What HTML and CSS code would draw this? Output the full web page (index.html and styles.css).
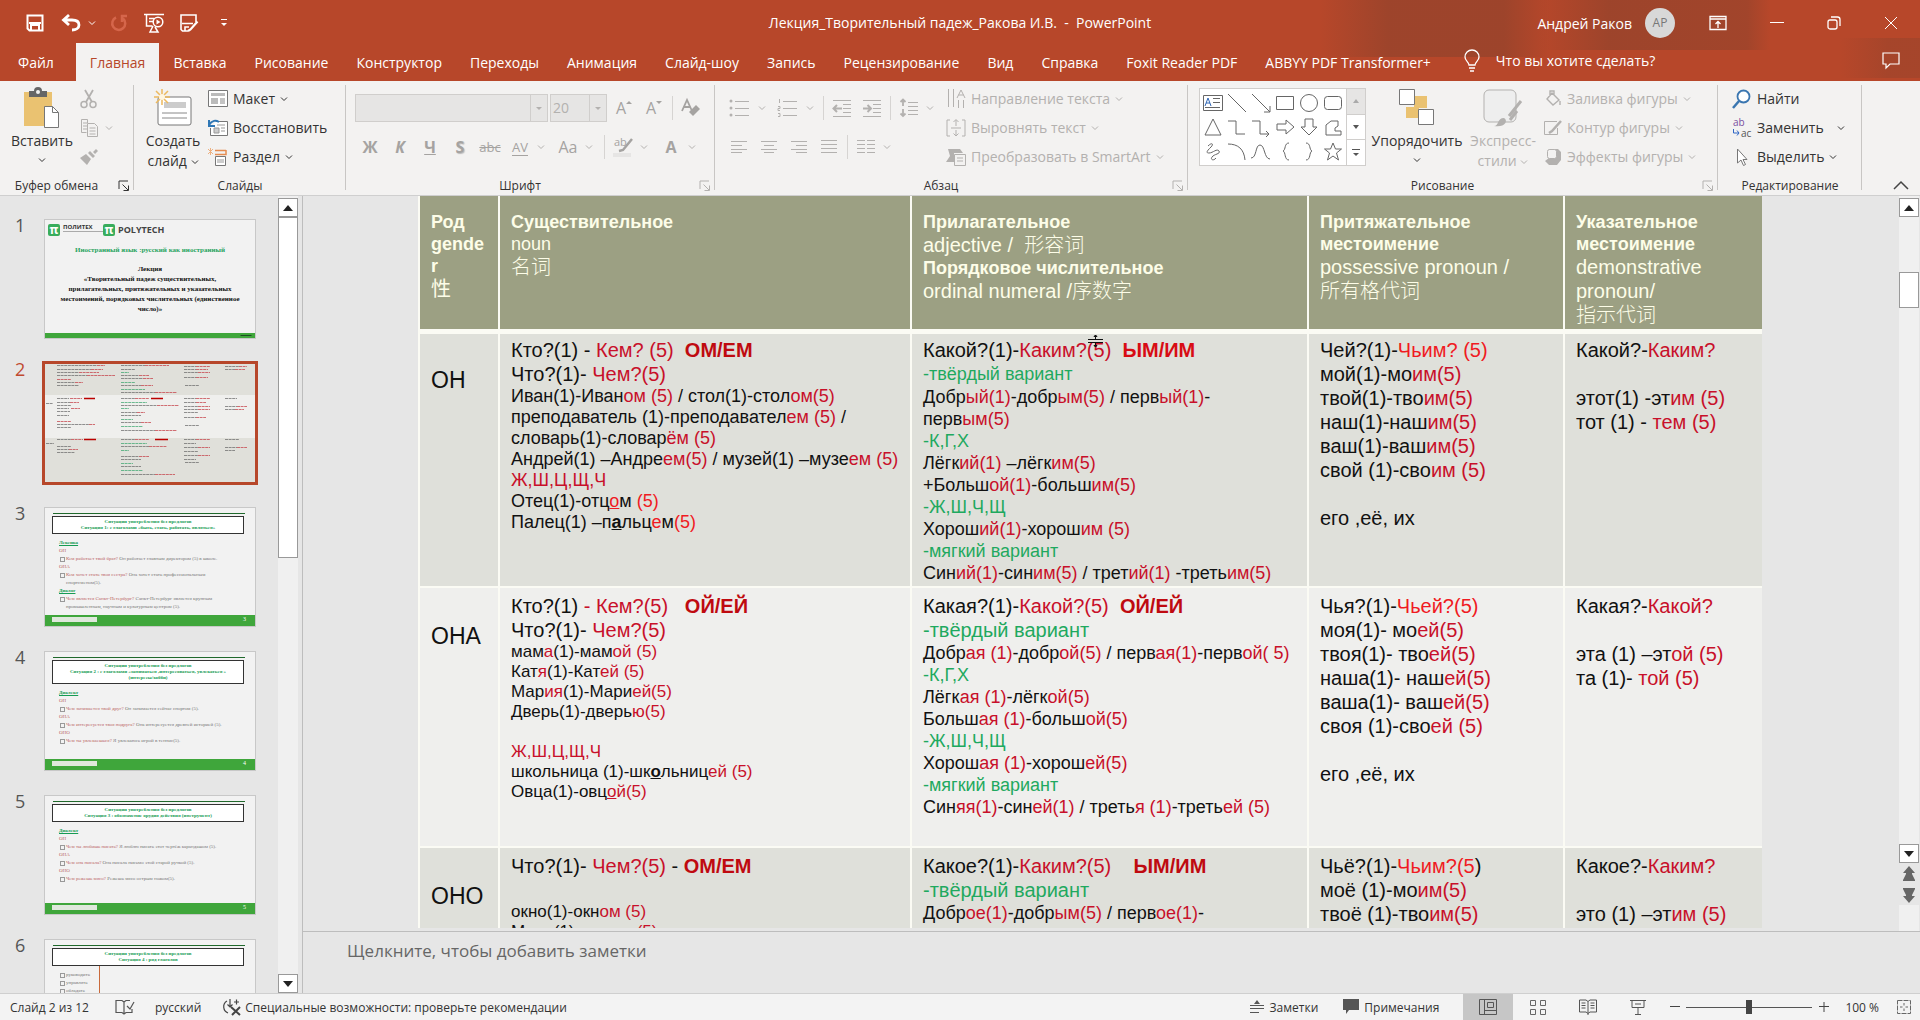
FILE: index.html
```html
<!DOCTYPE html>
<html lang="ru">
<head>
  <meta charset="utf-8">
  <title>Лекция_Творительный падеж_Ракова И.В. - PowerPoint</title>
  <link rel="stylesheet" href="styles.css">
</head>
<body>
  <svg class="defs" aria-hidden="true">
    <symbol id="chev" viewBox="0 0 8 8"><path d="M1 2.500l3 3 3-3" fill="none" stroke="currentColor"/></symbol>
    <symbol id="launch" viewBox="0 0 12 12"><path d="M1 9V1h9M4.500 4.500l5.500 5.500M10.500 5.500v5h-5" fill="none" stroke="currentColor"/></symbol>
  </svg>

  <header class="top">
    <div class="titlebar">
      <div class="quick">
        <button aria-label="Сохранить"><svg width="18" height="18" viewBox="0 0 18 18"><path d="M1.500 1.500h15v15h-13l-2-2z" fill="none" stroke="#fff" stroke-width="2"/><path d="M3 9h12M5 16v-5h8v5" fill="none" stroke="#fff" stroke-width="2"/></svg></button>
        <button class="q-undo" aria-label="Отменить"><svg width="20" height="18" viewBox="0 0 20 18"><path d="M8 1L2.500 6 8 11M3 6h8c5 0 7 2 7 5s-3 5-7 5" fill="none" stroke="#fff" stroke-width="2.800"/></svg></button>
        <button class="q-chev" aria-label="Список отмены"><svg width="8" height="8"><use href="#chev"/></svg></button>
        <button class="q-redo" aria-label="Повторить" disabled><svg width="18" height="18" viewBox="0 0 18 18"><path d="M6 3.500a6.500 6.500 0 1 0 7 1M17 2h-5v6" fill="none" stroke="#d5664b" stroke-width="2.500"/></svg></button>
        <button class="q-show" aria-label="С начала"><svg width="20" height="20" viewBox="0 0 20 20"><path d="M0 1.500h20M2.500 2v11h6M5 5.500h5M5 8.500h4M9 13l-3 6h8l-3-5" fill="none" stroke="#fff" stroke-width="1.500"/><circle cx="14" cy="9" r="4.800" fill="#b7472a" stroke="#fff" stroke-width="1.500"/><path d="M12.500 6.500v5l4-2.500z" fill="#fff"/></svg></button>
        <button class="q-edit" aria-label="Сохранить как"><svg width="18" height="18" viewBox="0 0 18 18"><path d="M16 8V1H1v14.500L2.500 17H8M2 9.500h11M5 16.500V13h4" fill="none" stroke="#fff" stroke-width="1.600"/><path d="M17.500 7.500l-7 8-2.500 1.500" fill="none" stroke="#fff" stroke-width="2.200"/></svg></button>
        <button class="q-more" aria-label="Настройка панели"><svg width="8" height="10" viewBox="0 0 8 10"><path d="M1 1.500h6" stroke="#fff"/><path d="M1 5h6L4 8z" fill="#fff"/></svg></button>
      </div>
      <div class="doc-title">Лекция_Творительный падеж_Ракова И.В.&nbsp; -&nbsp; PowerPoint</div>
      <div class="window">
        <span>Андрей Раков</span>
        <span class="avatar">АР</span>
        <button aria-label="Параметры ленты"><svg width="18" height="16" viewBox="0 0 18 16"><path d="M1 1.500h16v13H1zM1 4h16M9 13V7M6.500 9L9 6.500 11.500 9" fill="none" stroke="#fff" stroke-width="1.300"/></svg></button>
        <button aria-label="Свернуть"><svg width="14" height="14"><path d="M0 6.500h14" stroke="#fff"/></svg></button>
        <button aria-label="Восстановить"><svg width="14" height="14" viewBox="0 0 14 14"><rect x="1" y="4" width="9" height="9" rx="2" fill="none" stroke="#fff" stroke-width="1.300"/><path d="M4 1h6.500q2.500 0 2.500 2.500V10" fill="none" stroke="#fff" stroke-width="1.300"/></svg></button>
        <button aria-label="Закрыть"><svg width="14" height="14"><path d="M1 1l12 12M13 1L1 13" stroke="#fff"/></svg></button>
      </div>
    </div>
    <nav class="tabs">
      <a href="#">Файл</a>
      <a href="#" class="active">Главная</a>
      <a href="#">Вставка</a>
      <a href="#">Рисование</a>
      <a href="#">Конструктор</a>
      <a href="#">Переходы</a>
      <a href="#">Анимация</a>
      <a href="#">Слайд-шоу</a>
      <a href="#">Запись</a>
      <a href="#">Рецензирование</a>
      <a href="#">Вид</a>
      <a href="#">Справка</a>
      <a href="#">Foxit Reader PDF</a>
      <a href="#">ABBYY PDF Transformer+</a>
      <label class="tell" for="tell"><svg width="16" height="22" viewBox="0 0 16 22"><path d="M5 15c0-3-4-4-4-8a7 7 0 0 1 14 0c0 4-4 5-4 8zM5 18h6M6 21h4" fill="none" stroke="#fff" stroke-width="1.300"/></svg></label>
      <input id="tell" type="text" placeholder="Что вы хотите сделать?">
      <button class="comment-btn" aria-label="Примечания"><svg width="18" height="18" viewBox="0 0 18 18"><path d="M1 1h16v11H8l-4 4v-4H1z" fill="none" stroke="#fff" stroke-width="1.200"/></svg></button>
    </nav>
  </header>

  <section class="ribbon">
    <div class="group g-clip">
      <div class="group-body">
        <button class="big"><svg width="36" height="40" viewBox="0 0 36 40"><path d="M0 4h28v34H0z" fill="#eac271"/><path d="M5 3h5a4 4 0 0 1 8 0h5v6H5z" fill="#666"/><circle cx="14" cy="4" r="2" fill="#f3f2f1"/><path d="M20.500 18.500h8l6 6v15h-14z" fill="#fff" stroke="#777"/><path d="M28.500 18.500v6h6" fill="none" stroke="#777"/></svg>Вставить<svg width="8" height="8"><use href="#chev"/></svg></button>
        <div class="stack off">
          <button aria-label="Вырезать" disabled><svg width="18" height="20" viewBox="0 0 18 20"><path d="M5 1l7 12M13 1L6 13" stroke="currentColor" stroke-width="1.800"/><circle cx="4" cy="15.500" r="3" fill="none" stroke="currentColor" stroke-width="1.500"/><circle cx="13" cy="15.500" r="3" fill="none" stroke="currentColor" stroke-width="1.500"/></svg></button>
          <button aria-label="Копировать" disabled><svg width="20" height="20" viewBox="0 0 20 20"><path d="M7.500 5V1.500h-6v13h5M3 5h4M3 8h4M3 11h4M7.500 5.500h7l3 3v10h-10zM9.500 10h6M9.500 13h6M9.500 16h6" fill="none" stroke="currentColor"/></svg><svg class="near" width="8" height="8"><use href="#chev"/></svg></button>
          <button aria-label="Формат по образцу" disabled><svg width="20" height="18" viewBox="0 0 20 18"><path d="M0 10l6-4 5 5-4 6zM8 5l5 5 2-2-5-5zM13 4l3-3 2 2-3 3z" fill="currentColor"/></svg></button>
        </div>
      </div>
      <div class="group-name">Буфер обмена<button class="launcher" aria-label="Буфер обмена"><svg width="12" height="12"><use href="#launch"/></svg></button></div>
    </div>

    <div class="group g-slides">
      <div class="group-body">
        <button class="big"><svg width="38" height="38" viewBox="0 0 38 38"><rect x="4" y="8" width="33" height="28" rx="2" fill="#fff" stroke="#777"/><path d="M10 13h22v6H10z" fill="#ccc"/><path d="M8 24h25M8 29h25" stroke="#888"/><path d="M8 0v16M0 8h16M2 2l12 12M14 2L2 14" stroke="#edb95e" stroke-width="1.500"/><circle cx="8" cy="8" r="3" fill="#fff6e0"/></svg><span>Создать<br>слайд <svg width="8" height="8"><use href="#chev"/></svg></span></button>
        <div class="stack">
          <button><svg width="20" height="18" viewBox="0 0 20 18"><path d="M.500 .500h19v16H.500z" fill="#fff" stroke="#777"/><path d="M3 3h14v3H3zM3 8h7v6H3z" fill="#bbb"/><path d="M12 9h5M12 11h5M12 13h5" stroke="#888"/></svg>Макет <svg width="8" height="8"><use href="#chev"/></svg></button>
          <button><svg width="20" height="18" viewBox="0 0 20 18"><path d="M8 2.500h11.500v14H2.500V9" fill="#fff" stroke="#777"/><path d="M9 6h8M6 9h5v5H6zM13 9h4M13 12h4" stroke="#999" fill="#ccc"/><path d="M1 1v6h6M1 6c3-5 7-5 10-3" fill="none" stroke="#2f77b5" stroke-width="2"/></svg>Восстановить</button>
          <button><svg width="20" height="18" viewBox="0 0 20 18"><path d="M7 2.500h11M7 6.500h11V2" stroke="#e58c50" fill="none" stroke-width="1.500"/><path d="M7.500 8.500h10v9h-10z" fill="#fff" stroke="#777"/><path d="M9 11h7v4H9z" fill="#ccc"/><path d="M0 1l5 5M5 1L0 6M2.500 0v7" stroke="#edb080"/></svg>Раздел <svg width="8" height="8"><use href="#chev"/></svg></button>
        </div>
      </div>
      <div class="group-name">Слайды</div>
    </div>

    <div class="group g-font off">
      <div class="group-rows">
        <div class="tools">
          <div class="combo">
            <select class="font-name" aria-label="Шрифт" disabled><option></option></select>
            <svg width="6" height="4"><path d="M0 0h6L3 3z" fill="#b3b1af"/></svg>
          </div>
          <div class="combo">
            <select class="font-size" aria-label="Размер шрифта" disabled><option>20</option></select>
            <svg width="6" height="4"><path d="M0 0h6L3 3z" fill="#b3b1af"/></svg>
          </div>
          <button class="t" aria-label="Увеличить размер шрифта" disabled>A<svg width="6" height="14" viewBox="0 0 6 14"><path d="M0 3h6L3 0z" fill="currentColor"/></svg></button>
          <button class="t" aria-label="Уменьшить размер шрифта" disabled>A<svg width="6" height="14" viewBox="0 0 6 14"><path d="M0 0h6L3 3z" fill="currentColor"/></svg></button>
          <i class="sep"></i>
          <button class="t" aria-label="Очистить формат" disabled><svg width="20" height="20" viewBox="0 0 20 20"><path d="M1 13L6 2l5 11M3 9h6" fill="none" stroke="currentColor" stroke-width="1.800"/><path d="M8 14l7-7 4 4-7 7z" fill="currentColor"/></svg></button>
        </div>
        <div class="tools">
          <button class="t" disabled><b>Ж</b></button>
          <button class="t" disabled><b><em>К</em></b></button>
          <button class="t" disabled><b><u>Ч</u></b></button>
          <button class="t" disabled><b class="shadow">S</b></button>
          <button class="t small" disabled><s>abc</s></button>
          <button class="t small" disabled><span class="spacing">AV</span></button>
          <svg class="drop" width="8" height="8"><use href="#chev"/></svg>
          <button class="t" disabled>Aa</button>
          <svg class="drop" width="8" height="8"><use href="#chev"/></svg>
          <i class="sep"></i>
          <button class="t" aria-label="Цвет выделения" disabled><svg width="20" height="22" viewBox="0 0 20 22"><text x="1" y="10" font-size="11" fill="currentColor">ab</text><path d="M19 3L10 14l-4 1" fill="none" stroke="currentColor" stroke-width="2.500"/><path d="M0 17h18v4H0z" fill="#e6e5e4"/></svg></button>
          <svg class="drop" width="8" height="8"><use href="#chev"/></svg>
          <button class="t" disabled><b>A</b></button>
          <svg class="drop" width="8" height="8"><use href="#chev"/></svg>
        </div>
      </div>
      <div class="group-name">Шрифт<button class="launcher off" aria-label="Шрифт"><svg width="12" height="12"><use href="#launch"/></svg></button></div>
    </div>

    <div class="group g-para">
      <div class="group-body off">
        <div class="group-rows">
          <div class="tools">
            <button class="t" aria-label="Маркеры" disabled><svg width="20" height="18" viewBox="0 0 20 18"><path d="M6 2.500h14M6 9.500h14M6 16.500h14" stroke="currentColor"/><circle cx="2" cy="2" r="1.500" fill="currentColor"/><circle cx="2" cy="9" r="1.500" fill="currentColor"/><circle cx="2" cy="16" r="1.500" fill="currentColor"/></svg></button>
            <svg class="drop wide" width="8" height="8"><use href="#chev"/></svg>
            <button class="t" aria-label="Нумерация" disabled><svg width="20" height="18" viewBox="0 0 20 18"><path d="M6 2.500h14M6 9.500h14M6 16.500h14M2.500 0v4M1 7.500h2v2H1v2h2M1 14.500h2v3H1" fill="none" stroke="currentColor"/></svg></button>
            <svg class="drop wide" width="8" height="8"><use href="#chev"/></svg>
            <i class="sep"></i>
            <button class="t" aria-label="Уменьшить отступ" disabled><svg width="20" height="18" viewBox="0 0 20 18"><path d="M1 1.500h18M11 5.500h8M11 9.500h8M11 13.500h8M1 17.500h18" stroke="currentColor"/><path d="M10 9.500H2M5 6L1.500 9.500 5 13" fill="none" stroke="currentColor" stroke-width="2"/></svg></button>
            <button class="t" aria-label="Увеличить отступ" disabled><svg width="20" height="18" viewBox="0 0 20 18"><path d="M1 1.500h18M11 5.500h8M11 9.500h8M11 13.500h8M1 17.500h18" stroke="currentColor"/><path d="M1 9.500h8M5.500 6L9 9.500 5.500 13" fill="none" stroke="currentColor" stroke-width="2"/></svg></button>
            <i class="sep"></i>
            <button class="t" aria-label="Междустрочный интервал" disabled><svg width="20" height="20" viewBox="0 0 20 20"><path d="M9 4.500h10M9 8.500h10M9 12.500h10M9 16.500h10" stroke="currentColor"/><path d="M4 2v6M1.500 4L4 1.500 6.500 4M4 11v7M1.500 15.500L4 18l2.500-2.500" fill="none" stroke="currentColor" stroke-width="1.800"/></svg></button>
            <svg class="drop" width="8" height="8"><use href="#chev"/></svg>
          </div>
          <div class="tools">
            <button class="t" aria-label="По левому краю" disabled><svg width="16" height="12" viewBox="0 0 16 12"><path d="M0 .500h16M0 4.500h11M0 8.500h16M0 11.500h11" stroke="currentColor"/></svg></button>
            <button class="t" aria-label="По центру" disabled><svg width="16" height="12" viewBox="0 0 16 12"><path d="M0 .500h16M3 4.500h10M0 8.500h16M3 11.500h10" stroke="currentColor"/></svg></button>
            <button class="t" aria-label="По правому краю" disabled><svg width="16" height="12" viewBox="0 0 16 12"><path d="M0 .500h16M5 4.500h11M0 8.500h16M5 11.500h11" stroke="currentColor"/></svg></button>
            <button class="t" aria-label="По ширине" disabled><svg width="16" height="14" viewBox="0 0 16 14"><path d="M0 .500h16M0 4.500h16M0 8.500h16M0 12.500h16" stroke="currentColor"/></svg></button>
            <i class="sep"></i>
            <button class="t" aria-label="Колонки" disabled><svg width="18" height="14" viewBox="0 0 18 14"><path d="M0 .500h8M10 .500h8M0 4.500h8M10 4.500h8M0 8.500h8M10 8.500h8M0 12.500h8M10 12.500h8" stroke="currentColor"/></svg></button>
            <svg class="drop" width="8" height="8"><use href="#chev"/></svg>
          </div>
        </div>
        <div class="stack">
          <button disabled><svg width="20" height="20" viewBox="0 0 20 20"><path d="M2.500 0v18M7.500 0v18M12.500 11v8M17.500 11v8M11 9l4-8 4 8M12.500 6h5" fill="none" stroke="currentColor"/></svg>Направление текста <svg width="8" height="8"><use href="#chev"/></svg></button>
          <button disabled><svg width="20" height="18" viewBox="0 0 20 18"><path d="M4 1H1v16h3M16 1h3v16h-3M5 9h10M10 1v6M7.500 3L10 .500 12.500 3M10 11v6M7.500 14.500L10 17l2.500-2.500" fill="none" stroke="currentColor"/></svg>Выровнять текст <svg width="8" height="8"><use href="#chev"/></svg></button>
          <button disabled><svg width="20" height="18" viewBox="0 0 20 18"><path d="M2 1h12l3 4H8v9H0l4-6z" fill="currentColor"/><path d="M8.500 6.500h11v11h-11zM11 10h6M11 13h6" fill="#f3f2f1" stroke="currentColor"/></svg>Преобразовать в SmartArt <svg width="8" height="8"><use href="#chev"/></svg></button>
        </div>
      </div>
      <div class="group-name">Абзац<button class="launcher off" aria-label="Абзац"><svg width="12" height="12"><use href="#launch"/></svg></button></div>
    </div>

    <div class="group g-draw">
      <div class="group-body">
        <div class="gallery">
          <svg width="146" height="76" viewBox="0 0 146 76" fill="none" stroke="#666">
            <path d="M3.500 6.500h19v15h-19z"/><path d="M5 17l3-8 3 8M6 14h4" stroke="#2f66b5"/><path d="M13 9.500h7M13 13.500h7M5 18.500h15"/>
            <path d="M28 5l18 18M52 5l18 18M70 17v6h-6"/>
            <path d="M76.500 7.500h17v13h-17z"/><circle cx="109" cy="14" r="8.500"/><rect x="124.500" y="7.500" width="17" height="13" rx="3"/>
            <path d="M13 30l8 16H5zM28 32h8v13h9M52 32h8v13h9M66 42l3 3-3 3"/>
            <path d="M77 35h9v-4l8 7-8 7v-4h-9zM105 30h8v8h4l-8 8-8-8h4zM126 46V36l5-4h7v5l-3 2v3h6v4z"/>
            <path d="M8 57c4-4 6-2 3 1s-6 6-2 6 8-5 10-2-5 3-7 6 2 4 4 1"/><path d="M28 55c10 0 16 5 17 16M51 69c6 0 4-13 9-13s4 14 10 14"/>
            <path d="M89 54c-5 0-3 7-6 8 3 1 1 9 6 9M106 54c5 0 3 7 6 8-3 1-1 9-6 9"/>
            <path d="M133 54l2.500 6h6l-5 4 2 7-5.500-4-5.500 4 2-7-5-4h6z"/>
          </svg>
          <div class="gallery-nav">
            <button aria-label="Вверх" disabled><svg width="6" height="4"><path d="M0 4h6L3 0z" fill="#aaa"/></svg></button>
            <button aria-label="Вниз"><svg width="6" height="4"><path d="M0 0h6L3 4z" fill="#555"/></svg></button>
            <button aria-label="Все фигуры"><svg width="8" height="8"><path d="M0 .500h8" stroke="#555"/><path d="M1 4h6L4 7z" fill="#555"/></svg></button>
          </div>
        </div>
        <button class="big b-arr"><svg width="36" height="38" viewBox="0 0 36 38"><path d="M15 7h13v12H15zM7 18h13v11H7z" fill="#eac271"/><path d="M.500 .500h15v15H.500zM19.500 20.500h15v15h-15z" fill="#fff" stroke="#777"/></svg>Упорядочить<svg width="8" height="8"><use href="#chev"/></svg></button>
        <button class="big b-sty off" disabled><svg width="40" height="38" viewBox="0 0 40 38"><rect x="1" y="1" width="32" height="32" rx="5" fill="#eee" stroke="currentColor"/><path d="M38 12L26 27M34 22l-7 9" stroke="currentColor" stroke-width="3"/><path d="M11 37c5 0 3-8 10-8 5 3 0 10-10 8z" fill="currentColor"/></svg><span>Экспресс-<br>стили <svg width="8" height="8"><use href="#chev"/></svg></span></button>
        <div class="stack off">
          <button disabled><svg width="18" height="18" viewBox="0 0 18 18"><path d="M8 3l7 7-6 5-6-6zM6 6V1h4v5M16 11v4" fill="none" stroke="currentColor" stroke-width="1.400"/></svg>Заливка фигуры <svg width="8" height="8"><use href="#chev"/></svg></button>
          <button disabled><svg width="18" height="18" viewBox="0 0 18 18"><path d="M13 2.500H.500v13h13V9" fill="none" stroke="currentColor"/><path d="M17 2L8 12l-3 2" fill="none" stroke="currentColor" stroke-width="2.500"/></svg>Контур фигуры <svg width="8" height="8"><use href="#chev"/></svg></button>
          <button disabled><svg width="18" height="18" viewBox="0 0 18 18"><path d="M5 1h9l3 3v8l-4 5H5l-4-4 4-3z" fill="currentColor"/><rect x="3.500" y="1.500" width="9" height="9" rx="2" fill="#f3f2f1" stroke="currentColor"/></svg>Эффекты фигуры <svg width="8" height="8"><use href="#chev"/></svg></button>
        </div>
      </div>
      <div class="group-name">Рисование<button class="launcher off" aria-label="Рисование"><svg width="12" height="12"><use href="#launch"/></svg></button></div>
    </div>

    <div class="group g-edit">
      <div class="group-body">
        <div class="stack">
          <button><svg width="20" height="20" viewBox="0 0 20 20"><circle cx="11.500" cy="7.500" r="6" fill="#fff" stroke="#3a76b0" stroke-width="1.800"/><path d="M7 12l-6 7" stroke="#3a76b0" stroke-width="2.500"/></svg>Найти</button>
          <button><svg width="20" height="22" viewBox="0 0 20 22"><text x="1" y="9" font-size="10" fill="#7a4fa0">ab</text><text x="9" y="20" font-size="10" fill="#555">ac</text><path d="M1.500 12v4H7M5 13.500L7 16l-2 2.500" fill="none" stroke="#2f66c5"/></svg>Заменить <svg class="far" width="8" height="8"><use href="#chev"/></svg></button>
          <button><svg width="20" height="18" viewBox="0 0 20 18"><path d="M5.500 1v14l3.500-3 2.500 5.500 2-1-2.500-5h4z" fill="#fff" stroke="#777"/></svg>Выделить <svg width="8" height="8"><use href="#chev"/></svg></button>
        </div>
      </div>
      <div class="group-name">Редактирование</div>
    </div>
    <button class="collapse" aria-label="Свернуть ленту"><svg width="16" height="10"><path d="M1 9l7-7 7 7" fill="none" stroke="#444" stroke-width="1.500"/></svg></button>
  </section>

  <main class="work">
    <aside class="thumbs">
      <ol class="thumb-list">
        <li>
          <span class="num">1</span>
          <div class="slide cover">
            <div class="logos"><i class="pi">π</i><span class="logo-ru">ПОЛИТЕХ</span><i class="pi">π</i><span class="logo-en">POLYTECH</span></div>
            <p class="lang">Иностранный язык :русский как иностранный</p>
            <p class="topic">Лекция<br>«Творительный падеж существительных,<br>прилагательных, притяжательных и указательных<br>местоимений, порядковых числительных (единственное<br>число)»</p>
            <div class="strip"></div>
          </div>
        </li>
        <li class="current">
          <span class="num">2</span>
          <div class="slide">
            <svg width="210" height="118" viewBox="0 0 210 118">
              <path d="M0 0h210v118H0z" fill="#e0e0da"/><path d="M0 31h210v43H0z" fill="#efefed"/>
              <g stroke-width="1" stroke-dasharray="3 .6" fill="none" opacity=".7">
                <path stroke="#666" d="M12 1.500h40M12 5.500h34M12 8.500h22M12 11.500h30M12 18.500h18M12 21.500h22M1 39.500h7M12 34.500h12M12 38.500h13M12 41.500h14M12 44.500h12M12 47.500h13M12 51.500h12M12 60.500h32M12 63.500h14M1 79.500h8M12 75.500h14M12 82.500h14M12 85.500h12M12 88.500h18M76 1.500h24M76 5.500h14M76 11.500h18M76 14.500h22M76 21.500h20M76 28.500h34M76 34.500h14M76 41.500h36M76 48.500h16M76 51.500h20M76 58.500h20M76 66.500h34M76 75.500h14M76 82.500h28M76 92.500h18M76 95.500h20M76 102.500h20M76 110.500h34M139 2.500h12M139 5.500h12M139 8.500h14M139 13.500h12M140 21.500h14M139 34.500h12M139 38.500h12M139 42.500h14M139 45.500h14M139 48.500h14M139 53.500h12M140 61.500h14M139 75.500h12M139 79.500h12M139 83.500h14M139 87.500h14M139 91.500h14M139 95.500h12M140 98.500h14M180 2.500h14M180 5.500h10M180 34.500h12M180 42.500h12M180 45.500h10M180 75.500h14M180 83.500h12M180 86.500h10"/>
                <path stroke="#c4373f" d="M52 1.500h8M46 5.500h12M34 8.500h20M42 11.500h28M12 15.500h14M30 18.500h8M25 34.500h12M25 38.500h9M26 44.500h9M12 57.500h14M44 60.500h6M26 75.500h12M24 85.500h9M100 1.500h24M94 11.500h10M98 14.500h10M96 21.500h12M110 28.500h22M90 34.500h14M112 41.500h22M92 48.500h8M96 58.500h10M110 66.500h22M90 75.500h14M104 82.500h18M94 92.500h10M110 110.500h20M151 2.500h14M151 5.500h12M153 8.500h12M151 13.500h12M151 34.500h14M151 38.500h10M153 42.500h12M153 45.500h12M151 53.500h10M151 75.500h14M153 83.500h12M153 91.500h12M194 2.500h8M190 5.500h10M192 42.500h10M190 45.500h9M192 83.500h10"/>
                <path stroke="#35a56b" d="M76 8.500h8M76 18.500h14M76 25.500h24M76 38.500h26M76 44.500h8M76 55.500h12M76 62.500h22M76 79.500h26M76 86.500h8M76 99.500h12M76 106.500h22"/>
              </g>
              <path d="M39 34.500h11M39 75.500h12M106 34.500h12M110 75.500h13" stroke="#b00" stroke-width="1.500"/>
            </svg>
          </div>
        </li>
        <li>
          <span class="num">3</span>
          <div class="slide topic-slide">
            <h3>Ситуации употребления без предлогов<br>Ситуация 1: с глаголами «быть, стать, работать, являться»</h3>
            <div class="tiny"><u>Лексика</u><p>ОН</p><p class="q"><em>Кем работает твой брат?</em> Он работает главным директором (5) в школе.</p><p>ОНА</p><p class="q"><em>Кем хочет стать твоя сестра?</em> Она хочет стать профессиональным спортсменом(5).</p><u>Диалог</u><p class="q"><em>Чем является Санкт-Петербург?</em> Санкт-Петербург является крупным промышленным, научным и культурным центром (5).</p></div>
            <div class="strip wide">3</div>
          </div>
        </li>
        <li>
          <span class="num">4</span>
          <div class="slide topic-slide">
            <h3>Ситуации употребления без предлогов<br>Ситуация 2 : с глаголами «заниматься ,интересоваться, увлекаться »<br>(интересы/хобби)</h3>
            <div class="tiny"><u>Диалект</u><p>ОН</p><p class="q"><em>Чем занимается твой друг?</em> Он занимается сейчас спортом (5).</p><p>ОНА</p><p class="q"><em>Чем интересуется твоя подруга?</em> Она интересуется древней историей (5).</p><p>ОНО</p><p class="q"><em>Чем ты увлекаешься?</em> Я увлекаюсь игрой в теннис(5).</p></div>
            <div class="strip wide">4</div>
          </div>
        </li>
        <li>
          <span class="num">5</span>
          <div class="slide topic-slide">
            <h3>Ситуации употребления без предлогов<br>Ситуация 3 : обозначение орудия действия (инструмент)</h3>
            <div class="tiny"><u>Диалект</u><p>ОН</p><p class="q"><em>Чем ты любишь писать?</em> Я люблю писать этот чертёж карандашом (5).</p><p>ОНА</p><p class="q"><em>Чем она писала?</em> Она писала письмо этой старой ручкой (5).</p><p>ОНО</p><p class="q"><em>Чем режешь мясо?</em> Режешь мясо острым ножом(5).</p></div>
            <div class="strip wide">5</div>
          </div>
        </li>
        <li>
          <span class="num">6</span>
          <div class="slide topic-slide">
            <h3>Ситуации употребления без предлогов<br>Ситуация 4 : ряд глаголов</h3>
            <div class="tiny ruled"><p class="q">руководить</p><p class="q">управлять</p><p class="q">обладать</p></div>
          </div>
        </li>
      </ol>
      <div class="scroll">
        <button aria-label="Вверх"><svg width="10" height="6"><path d="M0 6h10L5 0z" fill="#222"/></svg></button>
        <div class="track"><div class="knob k-long"></div></div>
        <button aria-label="Вниз"><svg width="10" height="6"><path d="M0 0h10L5 6z" fill="#222"/></svg></button>
      </div>
    </aside>

    <section class="editor">
      <div class="stage">
        <div class="canvas">
          <table class="grammar">
            <colgroup><col class="c1"><col class="c2"><col class="c3"><col class="c4"><col></colgroup>
            <thead>
              <tr>
                <th><p>Род</p><p>gender</p><p class="cjk b">性</p></th>
                <th><p>Существительное</p><p class="n">noun</p><p class="cjk">名词</p></th>
                <th><p>Прилагательное</p><p class="en">adjective / &nbsp;<span class="cjk">形容词</span></p><p>Порядковое числительное</p><p class="en">ordinal numeral /<span class="cjk">序数字</span></p></th>
                <th><p>Притяжательное местоимение</p><p class="en">possessive pronoun /</p><p class="en"><span class="cjk">所有格代词</span></p></th>
                <th><p>Указательное местоимение</p><p class="en">demonstrative pronoun/</p><p class="en"><span class="cjk">指示代词</span></p></th>
              </tr>
            </thead>
            <tbody>
              <tr class="r1">
                <td class="who">ОН</td>
                <td>
                  <p>Кто?(1) - <span class="r">Кем? (5)</span>&nbsp; <b>ОМ/ЕМ</b></p>
                  <p>Что?(1)- <span class="r">Чем?(5)</span></p>
                  <p class="s">Иван(1)-Иван<span class="r">ом (5)</span> / стол(1)-стол<span class="r">ом(5)</span></p>
                  <p class="s">преподаватель (1)-преподавател<span class="r">ем (5)</span> /</p>
                  <p class="s">словарь(1)-словар<span class="r">ём (5)</span></p>
                  <p class="s">Андрей(1) –Андре<span class="r">ем(5)</span> / музей(1) –музе<span class="r">ем (5)</span></p>
                  <p class="s r">Ж,Ш,Ц,Щ,Ч</p>
                  <p class="s">Отец(1)-отц<u class="hot">о</u>м <span class="hot">(5)</span></p>
                  <p class="s">Палец(1) –п<u class="stress">а</u>льц<span class="hot">е</span>м<span class="hot">(5)</span></p>
                </td>
                <td>
                  <p>Какой?(1)-<span class="r">Каким?(5)</span>&nbsp; <b class="bright">ЫМ/ИМ</b></p>
                  <p class="lead g">-твёрдый вариант</p>
                  <p class="m">Добр<span class="r">ый(1)</span>-добр<span class="r">ым(5)</span> / перв<span class="r">ый(1)</span>-<br>перв<span class="r">ым(5)</span></p>
                  <p class="m g">-К,Г,Х</p>
                  <p class="m">Лёгк<span class="r">ий(1)</span> –лёгк<span class="r">им(5)</span></p>
                  <p class="m">+Больш<span class="r">ой(1)</span>-больш<span class="r">им(5)</span></p>
                  <p class="m g">-Ж,Ш,Ч,Щ</p>
                  <p class="m">Хорош<span class="r">ий(1)</span>-хорош<span class="r">им (5)</span></p>
                  <p class="m g">-мягкий вариант</p>
                  <p class="m">Син<span class="r">ий(1)</span>-син<span class="r">им(5)</span> / трет<span class="r">ий(1)</span> -треть<span class="r">им(5)</span></p>
                </td>
                <td>
                  <p>Чей?(1)-<span class="hot">Чьим? (5)</span></p>
                  <p>мой(1)-мо<span class="r">им(5)</span></p>
                  <p>твой(1)-тво<span class="r">им(5)</span></p>
                  <p>наш(1)-наш<span class="r">им(5)</span></p>
                  <p>ваш(1)-ваш<span class="r">им(5)</span></p>
                  <p>свой (1)-сво<span class="r">им (5)</span></p>
                  <p>&nbsp;</p>
                  <p>его ,её, их</p>
                </td>
                <td>
                  <p>Какой?-<span class="r">Каким?</span></p>
                  <p>&nbsp;</p>
                  <p>этот(1) -эт<span class="r">им (5)</span></p>
                  <p>тот (1) - <span class="r">тем (5)</span></p>
                </td>
              </tr>
              <tr class="r2">
                <td class="who">ОНА</td>
                <td>
                  <p>Кто?(1) <span class="r">- Кем?(5)</span>&nbsp;&nbsp; <b>ОЙ/ЕЙ</b></p>
                  <p>Что?(1)- <span class="r">Чем?(5)</span></p>
                  <p class="xs">мам<span class="r">а</span>(1)-мам<span class="r">ой (5)</span></p>
                  <p class="xs">Кат<span class="r">я</span>(1)-Кат<span class="r">ей (5)</span></p>
                  <p class="xs">Мар<span class="r">ия</span>(1)-Мари<span class="r">ей(5)</span></p>
                  <p class="xs">Дверь(1)-дверь<span class="r">ю(5)</span></p>
                  <p class="xs">&nbsp;</p>
                  <p class="xs r">Ж,Ш,Ц,Щ,Ч</p>
                  <p class="xs">школьница (1)-шк<u class="stress">о</u>льниц<span class="r">ей (5)</span></p>
                  <p class="xs">Овца(1)-овц<u class="r">о</u><span class="r">й(5)</span></p>
                </td>
                <td>
                  <p>Какая?(1)-<span class="r">Какой?(5)</span>&nbsp; <b>ОЙ/ЕЙ</b></p>
                  <p class="g">-твёрдый вариант</p>
                  <p class="m">Добр<span class="r">ая (1)</span>-добр<span class="r">ой(5)</span> / перв<span class="r">ая(1)</span>-перв<span class="r">ой( 5)</span></p>
                  <p class="m g">-К,Г,Х</p>
                  <p class="m">Лёгк<span class="r">ая (1)</span>-лёгк<span class="r">ой(5)</span></p>
                  <p class="m">Больш<span class="r">ая (1)</span>-больш<span class="r">ой(5)</span></p>
                  <p class="m g">-Ж,Ш,Ч,Щ</p>
                  <p class="m">Хорош<span class="r">ая (1)</span>-хорош<span class="r">ей(5)</span></p>
                  <p class="m g">-мягкий вариант</p>
                  <p class="m">Син<span class="r">яя(1)</span>-син<span class="r">ей(1)</span> / треть<span class="r">я (1)</span>-треть<span class="r">ей (5)</span></p>
                </td>
                <td>
                  <p>Чья?(1)-<span class="hot">Чьей?(5)</span></p>
                  <p>моя(1)- мо<span class="r">ей(5)</span></p>
                  <p>твоя(1)- тво<span class="r">ей(5)</span></p>
                  <p>наша(1)- наш<span class="r">ей(5)</span></p>
                  <p>ваша(1)- ваш<span class="r">ей(5)</span></p>
                  <p>своя (1)-сво<span class="r">ей (5)</span></p>
                  <p>&nbsp;</p>
                  <p>его ,её, их</p>
                </td>
                <td>
                  <p>Какая?-<span class="r">Какой?</span></p>
                  <p>&nbsp;</p>
                  <p>эта (1) –эт<span class="r">ой (5)</span></p>
                  <p>та (1)- <span class="r">той (5)</span></p>
                </td>
              </tr>
              <tr class="r3">
                <td class="who">ОНО</td>
                <td>
                  <p>Что?(1)- <span class="r">Чем?(5)</span> - <b>ОМ/ЕМ</b></p>
                  <p>&nbsp;</p>
                  <p class="xs">окно(1)-окн<span class="r">ом (5)</span></p>
                  <p class="xs">Море(1)-мор<span class="r">ем (5)</span></p>
                </td>
                <td>
                  <p>Какое?(1)-<span class="r">Каким?(5)</span>&nbsp;&nbsp;&nbsp; <b>ЫМ/ИМ</b></p>
                  <p class="g">-твёрдый вариант</p>
                  <p class="m">Добр<span class="r">ое(1)</span>-добр<span class="r">ым(5)</span> / перв<span class="r">ое(1)</span>-</p>
                </td>
                <td>
                  <p>Чьё?(1)-<span class="hot">Чьим?(5</span>)</p>
                  <p>моё (1)-мо<span class="r">им(5)</span></p>
                  <p>твоё (1)-тво<span class="r">им(5)</span></p>
                </td>
                <td>
                  <p>Какое?-<span class="r">Каким?</span></p>
                  <p>&nbsp;</p>
                  <p>это (1) –эт<span class="r">им (5)</span></p>
                </td>
              </tr>
            </tbody>
          </table>
          <svg class="resize-cursor" width="15" height="16" viewBox="0 0 15 16"><path d="M0 6.500h15M0 9.500h15M7.500 2v4M7.500 10v4M6 3.500L7.500 2 9 3.500zM6 12.500L7.500 14 9 12.500z" fill="#111" stroke="#111"/></svg>
        </div>
        <div class="scroll">
          <button aria-label="Вверх"><svg width="10" height="6"><path d="M0 6h10L5 0z" fill="#222"/></svg></button>
          <div class="track"><div class="knob k-short"></div></div>
          <button aria-label="Вниз"><svg width="10" height="6"><path d="M0 0h10L5 6z" fill="#222"/></svg></button>
          <button class="jump" aria-label="Предыдущий слайд"><svg width="12" height="16"><path d="M0 7l6-7 6 7H9v1l3 6v1H0v-1l3-6V7z" fill="#666"/></svg></button>
          <button class="jump" aria-label="Следующий слайд"><svg width="12" height="16"><path d="M0 9l6 7 6-7H9V8l3-6V1H0v1l3 6v1z" fill="#666"/></svg></button>
        </div>
      </div>
      <textarea class="notes" aria-label="Заметки к слайду" placeholder="Щелкните, чтобы добавить заметки"></textarea>
    </section>
  </main>

  <footer class="status">
    <span class="st-slide">Слайд 2 из 12</span>
    <button class="st-spell" aria-label="Правописание"><svg width="20" height="16" viewBox="0 0 20 16"><path d="M9 14.500V3L7 1.500H1v12h6l2 1.500 2-1.500h6V10M9 3l2-1.500h4M12 7l3 3 4-7" fill="none" stroke="#555" stroke-width="1.200"/></svg></button>
    <button class="st-lang">русский</button>
    <button class="st-acc"><svg width="20" height="18" viewBox="0 0 20 18"><path d="M5 3C0 6 1 13 6 15M8 1v8M5.500 6.500L8 9l2.500-2.500M12 4h5M14.500 1.500v5" fill="none" stroke="#444" stroke-width="1.200"/><path d="M9 9l9 8M18 9l-8 8" stroke="#444" stroke-width="2"/></svg>Специальные возможности: проверьте рекомендации</button>
    <div class="st-right">
      <button class="st-notes"><svg width="14" height="14" viewBox="0 0 14 14"><path d="M0 5.500h14M0 8.500h14M0 12.500h9" stroke="#555"/><path d="M4 4h6L7 0z" fill="#555"/></svg>Заметки</button>
      <button class="st-comm"><svg width="18" height="16" viewBox="0 0 18 16"><path d="M1 0h16v11H7l-3 4v-4H1z" fill="#555"/></svg>Примечания</button>
      <button class="view on" aria-label="Обычный"><svg width="18" height="16" viewBox="0 0 18 16"><path d="M.500 .500h17v15H.500zM5.500 0v16M5.500 11.500h12M8.500 3.500h6v5h-6z" fill="none" stroke="#555"/></svg></button>
      <button class="view" aria-label="Сортировщик"><svg width="16" height="16" viewBox="0 0 16 16"><path d="M.500 1.500h5v5h-5zM10.500 1.500h5v5h-5zM.500 10.500h5v5h-5zM10.500 10.500h5v5h-5z" fill="none" stroke="#666"/></svg></button>
      <button class="view" aria-label="Чтение"><svg width="18" height="16" viewBox="0 0 18 16"><path d="M9 2.500L7 1H.500v12H7l2 1.500 2-1.500h6.500V1H11zV16M2.500 4h4M2.500 6.500h4M2.500 9h4M11.500 4h4M11.500 6.500h4M11.500 9h4" fill="none" stroke="#555"/></svg></button>
      <button class="view" aria-label="Показ слайдов"><svg width="16" height="16" viewBox="0 0 16 16"><path d="M0 1.500h16M2 1.500v7h12v-7M5 5h6M8 9v6M5 15.500h6" fill="none" stroke="#555"/></svg></button>
      <button class="zoom-btn" aria-label="Уменьшить"><svg width="10" height="10"><path d="M0 4.500h10" stroke="#444"/></svg></button>
      <input class="zoom" type="range" min="0" max="100" value="50" aria-label="Масштаб">
      <button class="zoom-btn" aria-label="Увеличить"><svg width="10" height="10"><path d="M0 4.500h10M5 0v10" stroke="#444"/></svg></button>
      <button class="zoom-val">100 %</button>
      <button class="fit" aria-label="Вписать слайд"><svg width="14" height="14" viewBox="0 0 14 14"><path d="M.500 .500h13v13H.500zM7 3v2.500M7 8.500V11M3 7h2.500M8.500 7H11" fill="none" stroke="#666" stroke-dasharray="5 1"/></svg></button>
    </div>
  </footer>
</body>
</html>
```

FILE: styles.css
```css
* {
  box-sizing: border-box;
}
body {
  margin: 0;
  height: 100vh;
  display: flex;
  flex-direction: column;
  overflow: hidden;
  background: #e6e6e6;
  font-family: 'Open Sans', 'Noto Sans', sans-serif;
  font-size: 14px;
  color: #333;
}
p, h3, ol {
  margin: 0;
  padding: 0;
}
button, input, select, textarea {
  font: inherit;
  color: inherit;
  background: none;
  border: none;
  padding: 0;
  margin: 0;
}
svg {
  display: block;
  flex: none;
  overflow: visible;
}
.defs {
  display: none;
}
.off {
  color: #b3b1af;
}

/* title bar and tabs */
.top {
  color: #fff;
  background-color: #b7472a;
  background-image:
    linear-gradient(90deg, transparent, rgba(140, 66, 44, .6) 30%, rgba(140, 66, 44, .6) 80%, transparent),
    linear-gradient(90deg, transparent, rgba(140, 66, 44, .6) 30%, rgba(140, 66, 44, .5) 90%, transparent),
    linear-gradient(90deg, transparent, rgba(140, 66, 44, .4) 60%);
  background-repeat: no-repeat;
  background-size: 230px 57px, 230px 50px, 80px 40px;
  background-position: right 370px top 0, right 150px top 0, right 0 top 38px;
}
.titlebar {
  display: grid;
  grid-template-columns: 1fr auto 1fr;
  height: 40px;
}
.quick, .window {
  display: flex;
  align-items: center;
}
.quick {
  padding-left: 26px;
}
.q-undo {
  margin-left: 17px;
}
.q-chev {
  margin-left: 7px;
}
.q-redo {
  margin-left: 14px;
}
.q-show, .q-edit {
  margin-left: 16px;
}
.q-more {
  margin-left: 22px;
}
.doc-title {
  line-height: 46px;
}
.window {
  justify-content: flex-end;
  padding-right: 22px;
}
.window button {
  margin-left: 43px;
}
.window .avatar + button {
  margin-left: 34px;
}
.avatar {
  width: 30px;
  height: 30px;
  margin-left: 13px;
  border-radius: 50%;
  background: #d8d8d8;
  color: #777;
  font-size: 12px;
  line-height: 30px;
  text-align: center;
}
.tabs {
  display: flex;
  align-items: center;
  height: 41px;
  padding-left: 4px;
}
.tabs a {
  height: 38px;
  padding: 0 14px;
  line-height: 40px;
  margin-top: 3px;
  color: #fff;
  text-decoration: none;
}
.tabs a.active {
  margin-left: 8px;
  background: #f3f2f1;
  color: #b7472a;
}
.tell {
  margin: 0 16px 0 19px;
}
#tell {
  width: 200px;
}
#tell::placeholder {
  color: #fff;
  opacity: 1;
}
.comment-btn {
  margin: 0 20px 0 auto;
}

/* ribbon */
.ribbon {
  display: flex;
  height: 115px;
  background: #f3f2f1;
  border-bottom: 1px solid #cfcfcf;
  line-height: 20px;
}
.group {
  position: relative;
  display: flex;
  flex-direction: column;
  padding-top: 3px;
}
.group::after {
  content: '';
  position: absolute;
  right: 0;
  top: 4px;
  bottom: 5px;
  width: 1px;
  background: #c8c6c4;
}
.g-clip {
  width: 134px;
}
.g-slides {
  width: 212px;
}
.g-font {
  width: 369px;
}
.g-para {
  width: 473px;
}
.g-draw {
  width: 530px;
}
.g-edit {
  width: 144px;
}
.group-body {
  display: flex;
  flex: 1;
}
.group-name {
  position: relative;
  height: 19px;
  color: #333;
  font-size: 12px;
  text-align: center;
}
.g-clip .group-name, .g-font .group-name, .g-para .group-name, .g-draw .group-name {
  padding-right: 21px;
}
.launcher {
  position: absolute;
  right: 4px;
  top: 4px;
}
.big {
  display: flex;
  flex-direction: column;
  align-items: center;
  padding-top: 4px;
}
.big > svg:first-child {
  height: 40px;
  margin-bottom: 3px;
}
.big span svg, .stack button > svg:last-child {
  display: inline-block;
}
.big > svg:last-child {
  margin-top: 5px;
}
.g-clip .big {
  width: 72px;
  margin: 0 6px;
}
.g-slides .big {
  width: 58px;
  margin: 0 6px 0 10px;
}
.g-draw .b-arr {
  width: 98px;
  margin-left: 2px;
}
.g-draw .b-sty {
  width: 74px;
}
.stack {
  display: flex;
  flex-direction: column;
}
.stack button {
  display: flex;
  align-items: center;
  height: 29px;
  gap: 5px;
  white-space: nowrap;
}
.stack .far {
  margin-left: 8px;
}
.g-clip .stack {
  margin-left: -4px;
}
.g-draw .stack {
  margin-left: 4px;
}
.g-edit .stack {
  margin-left: 14px;
}
.group-rows {
  flex: 1;
  padding: 10px 0 0 9px;
}
.g-para .group-rows {
  flex: none;
  width: 231px;
}
.tools {
  display: flex;
  align-items: center;
  height: 28px;
  margin-bottom: 11px;
}
.tools .t {
  display: flex;
  align-items: center;
  justify-content: center;
  width: 30px;
  height: 28px;
  font-size: 16px;
}
.g-font .t {
  color: #a5a3a1;
}
.tools .small {
  font-size: 13px;
}
.shadow {
  text-shadow: 1px 1px 1px #bbb;
}
.spacing {
  border-bottom: 1px solid;
  line-height: 16px;
}
.drop {
  margin: 0 8px 0 2px;
}
.drop.wide {
  margin: 0 6px 0 4px;
}
.sep {
  width: 1px;
  height: 24px;
  margin: 0 3px;
  background: #d6d4d2;
}
.combo {
  position: relative;
  margin-right: 2px;
}
.combo svg {
  position: absolute;
  right: 6px;
  top: 13px;
}
.tools select {
  display: block;
  height: 28px;
  padding-left: 2px;
  border: 1px solid #d0cecc;
  border-radius: 0;
  background: #e6e5e4 linear-gradient(#d0cecc, #d0cecc) no-repeat right 16px top 0 / 1px 100%;
  appearance: none;
  opacity: 1;
}
.font-name {
  width: 193px;
}
.font-size {
  width: 57px;
}
.gallery {
  display: flex;
  width: 167px;
  height: 78px;
  margin: 4px 0 0 11px;
  border: 1px solid #d0cecc;
  background: #fff;
}
.gallery-nav {
  display: flex;
  flex-direction: column;
  flex: 1;
  border-left: 1px solid #d0cecc;
}
.gallery-nav button {
  display: flex;
  flex: 1;
  align-items: center;
  justify-content: center;
}
.gallery-nav button + button {
  border-top: 1px solid #d0cecc;
}
.gallery-nav button:disabled {
  background: #e6e5e4;
}
.collapse {
  margin: auto 11px 5px auto;
}

/* work area */
.work {
  display: flex;
  flex: 1;
  min-height: 0;
}
.thumbs {
  display: flex;
  width: 303px;
  border-right: 1px solid #bdbdbd;
}
.thumb-list {
  flex: 1;
  padding-top: 24px;
  overflow: hidden;
  list-style: none;
}
.thumb-list li {
  display: flex;
  height: 144px;
}
.num {
  width: 45px;
  margin-top: -8px;
  padding-left: 15px;
  font-size: 18px;
  line-height: 26px;
  color: #555;
}
.current .num {
  color: #c04a30;
}
.slide {
  position: relative;
  width: 210px;
  height: 118px;
  background: #f2f2f2;
  outline: 1px solid #c8c8c8;
  overflow: hidden;
  font-family: 'Liberation Serif', serif;
}
.current .slide {
  outline: 3px solid #b7472a;
}
.strip {
  position: absolute;
  left: 0;
  right: 0;
  bottom: 0;
  height: 5px;
  background: radial-gradient(ellipse at 201px 50%, #1d4d23 5px, transparent 6px) #3fa63b;
}
.strip.wide {
  height: 11px;
  padding-right: 9px;
  background: linear-gradient(#dfe8dc, #dfe8dc) no-repeat 7px 2px / 45px 5px #3fa63b;
  color: #fff;
  font-size: 6px;
  line-height: 9px;
  text-align: right;
}
.cover {
  text-align: center;
  font-weight: bold;
}
.logos {
  display: flex;
  align-items: flex-start;
  padding: 4px 3px 0;
  font-family: 'Open Sans', sans-serif;
  line-height: 12px;
}
.pi {
  width: 12px;
  height: 12px;
  margin-right: 3px;
  border-radius: 2px;
  background: #38ad5c;
  color: #fff;
  font-size: 12px;
  font-style: normal;
  line-height: 11px;
}
.logo-ru {
  width: 40px;
  font-size: 6px;
  line-height: 7px;
  text-align: left;
  border-bottom: 1px solid #aaa;
}
.logo-en {
  font-size: 9px;
  color: #444;
}
.lang {
  margin-top: 9px;
  color: #27a35d;
  font-size: 7px;
  line-height: 10px;
}
.topic {
  margin-top: 9px;
  color: #111;
  font-size: 7px;
  line-height: 10px;
}
.topic-slide h3 {
  margin: 8px 11px 0 7px;
  border: 1px solid #333;
  background: #fff;
  color: #169c54;
  font-size: 5px;
  line-height: 6px;
  padding: 2px 0;
  text-align: center;
  white-space: nowrap;
  position: relative;
}
.topic-slide h3::before {
  content: '';
  position: absolute;
  left: 0;
  right: -2px;
  top: -4px;
  height: 1px;
  background: #20692c;
}
.tiny {
  padding: 5px 20px 0 14px;
  font-size: 5px;
  line-height: 8px;
  color: #777;
}
.tiny u {
  display: block;
  color: #169c54;
  font-weight: bold;
}
.tiny p {
  color: #b66;
}
.tiny .q {
  padding-left: 7px;
  color: #777;
  position: relative;
}
.tiny .q::before {
  content: '';
  position: absolute;
  left: 1px;
  top: 2px;
  width: 3px;
  height: 3px;
  border: 1px solid #999;
}
.tiny em {
  font-style: normal;
  color: #b66;
}
.ruled {
  width: 55px;
  padding-right: 0;
  border-right: 1px solid #c96a3c;
}
.scroll {
  display: flex;
  flex-direction: column;
  width: 20px;
  padding-top: 2px;
  background: #f0f0f0;
}
.thumbs .scroll {
  margin-right: 4px;
}
.scroll button {
  display: flex;
  align-items: center;
  justify-content: center;
  height: 19px;
  border: 1px solid #999;
  background: #fff;
}
.scroll .jump {
  height: 21px;
  border: none;
  background: #e6e6e6;
}
.track {
  flex: 1;
}
.knob {
  border: 1px solid #999;
  background: #fff;
}
.k-long {
  height: 341px;
}
.k-short {
  height: 36px;
  margin-top: 55px;
}
.editor {
  display: flex;
  flex: 1;
  flex-direction: column;
  min-width: 0;
}
.stage {
  display: flex;
  flex: 1;
  min-height: 0;
}
.stage .scroll {
  padding-bottom: 26px;
  margin-right: 1px;
}
.canvas {
  position: relative;
  flex: 1;
  margin-bottom: 3px;
  padding: 0 137px 0 115px;
  overflow: hidden;
}
.resize-cursor {
  position: absolute;
  left: 785px;
  top: 137px;
}

/* slide table */
.grammar {
  width: 100%;
  table-layout: fixed;
  border-collapse: separate;
  border-spacing: 0;
  background: #fbfbf4;
  color: #111;
  font-family: 'Liberation Sans', 'Noto Sans CJK SC', sans-serif;
  font-size: 20px;
  line-height: 24px;
}
.c1 {
  width: 80px;
}
.c2 {
  width: 412px;
}
.c3 {
  width: 397px;
}
.c4 {
  width: 256px;
}
.grammar th, .grammar td {
  padding: 6px 10px 0 11px;
  border-left: 2px solid #fbfbf4;
  vertical-align: top;
  text-align: left;
}
.grammar th {
  height: 133px;
  padding-top: 15px;
  background: #9ca083;
  color: #fdfde8;
  font-size: 18px;
  line-height: 22px;
  overflow-wrap: anywhere;
}
.grammar th .n {
  font-weight: normal;
}
.grammar th .en {
  font-size: 20px;
  line-height: 24px;
  font-weight: normal;
}
.grammar th .cjk {
  font-family: 'Noto Sans CJK SC', sans-serif;
  font-size: 20px;
  font-weight: 300;
  line-height: 22px;
}
.grammar th .cjk.b {
  font-weight: normal;
}
.grammar td {
  border-top: 2px solid #fbfbf4;
  background: #dfe0da;
}
.grammar .r1 td {
  height: 257px;
  padding-top: 4px;
  border-top-width: 5px;
}
.grammar .r2 td {
  height: 260px;
  background: #efefed;
}
.r3 td {
  height: 160px;
}
.grammar tr .who {
  padding-top: 34px;
  font-size: 23px;
  line-height: 28px;
}
.grammar .r1 .who {
  padding-top: 32px;
}
.grammar .m {
  font-size: 18px;
  line-height: 22px;
}
.grammar .lead {
  font-size: 18px;
}
.grammar .s {
  font-size: 18px;
  line-height: 21px;
}
.grammar .xs {
  font-size: 17px;
  line-height: 20px;
}
.grammar .r {
  color: #c8102a;
}
.grammar .hot {
  color: #f01a22;
}
.grammar .g {
  color: #1fa95f;
}
.grammar b {
  color: #bf0a10;
}
.grammar .bright {
  color: #d80c14;
}
.stress {
  font-weight: bold;
}

.notes {
  height: 62px;
  padding: 6px 44px;
  border-top: 1px solid #bdbdbd;
  font-size: 17px;
  line-height: 26px;
  resize: none;
}
.notes::placeholder {
  color: #666;
}

/* status bar */
.status {
  display: flex;
  align-items: center;
  height: 27px;
  padding-left: 10px;
  border-top: 1px solid #cfcfcf;
  background: #f3f3f3;
  font-size: 12px;
  white-space: nowrap;
}
.status button {
  display: flex;
  align-items: center;
}
.st-spell {
  margin-left: 26px;
}
.st-lang {
  margin-left: 20px;
}
.st-acc {
  gap: 3px;
  margin-left: 21px;
}
.st-right {
  display: flex;
  align-items: center;
  height: 100%;
  margin-left: auto;
}
.st-notes {
  gap: 6px;
}
.st-comm {
  gap: 4px;
  margin: 0 24px;
}
.status .view {
  justify-content: center;
  width: 50px;
  height: 100%;
}
.status .view.on {
  background: #c6c6c6;
}
.zoom-btn {
  margin-left: 7px;
}
.zoom {
  width: 126px;
  height: 16px;
  margin: 0 0 0 6px;
  appearance: none;
  background: linear-gradient(#555, #555) no-repeat center / 100% 1px;
}
.zoom::-webkit-slider-thumb {
  appearance: none;
  width: 6px;
  height: 14px;
  background: #444;
}
.zoom-val {
  margin-left: 16px;
}
.fit {
  margin: 0 9px 0 18px;
}
```
